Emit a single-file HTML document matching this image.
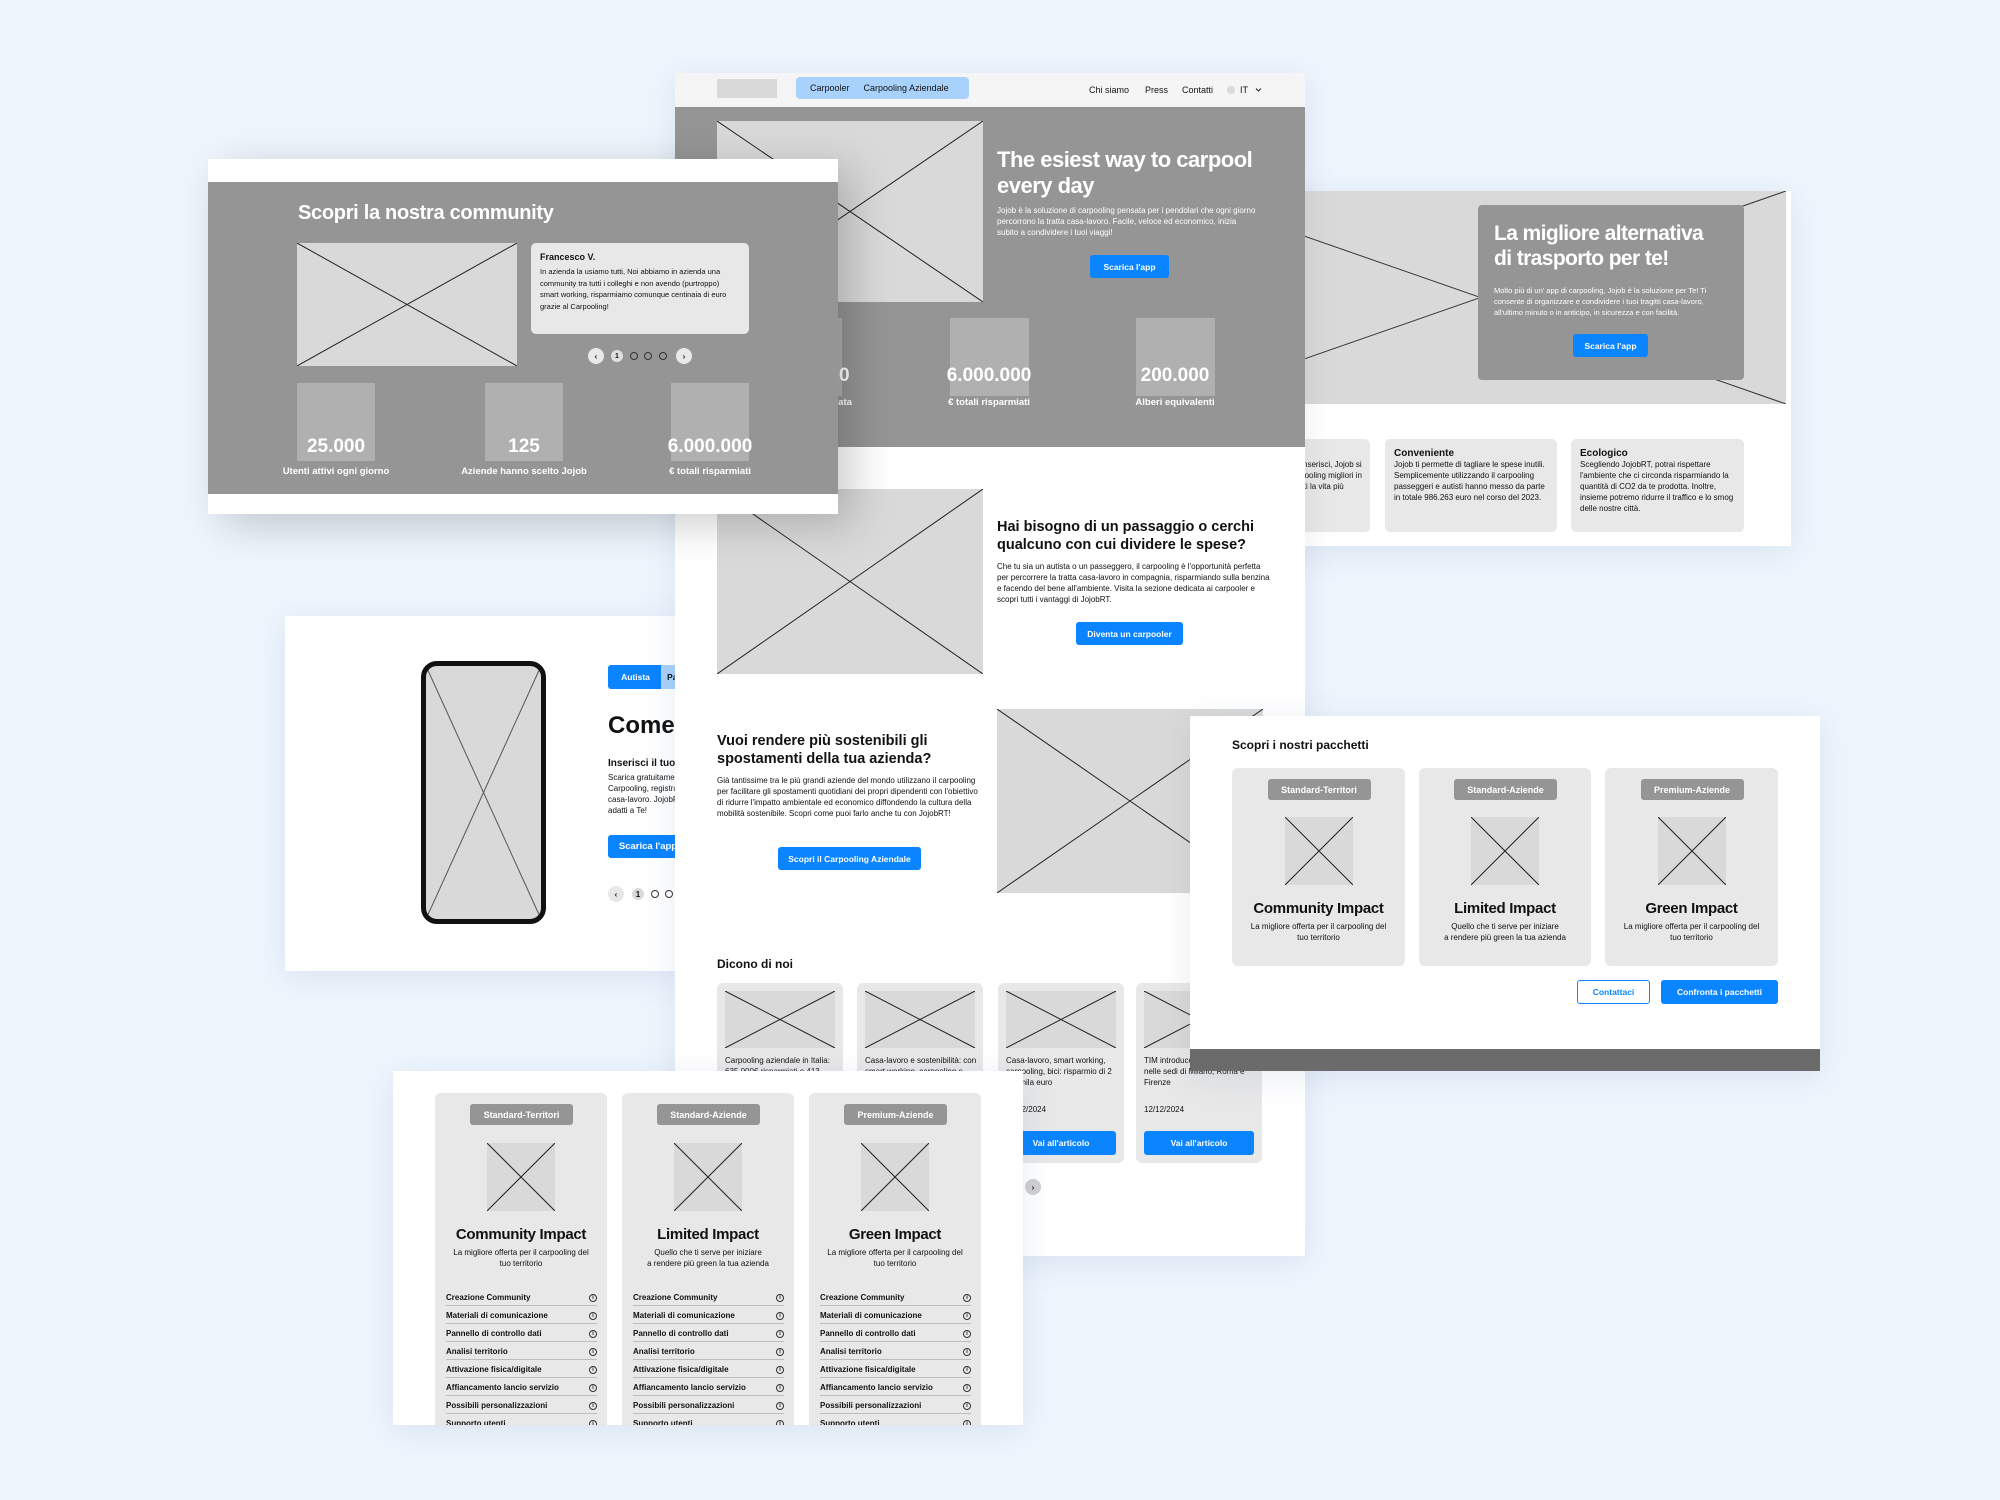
<!DOCTYPE html>
<html><head><meta charset="utf-8"><style>
*{margin:0;padding:0;box-sizing:border-box}
body{width:2000px;height:1500px;background:#eef5fd;font-family:"Liberation Sans",sans-serif;position:relative;overflow:hidden;color:#111}
.p{position:absolute;background:#fff;overflow:hidden;box-shadow:0 6px 30px rgba(90,120,160,.14)}
.a{position:absolute}
.ph{position:absolute;background:#d9d9d9}
.ph svg{position:absolute;left:0;top:0;width:100%;height:100%}
.btn{position:absolute;background:#0a84ff;color:#fff;border-radius:3px;font-size:8.5px;font-weight:bold;display:flex;align-items:center;justify-content:center}
.w{color:#fff}
.b{font-weight:bold}
.t8{font-size:8px;line-height:11px}
.stat{position:absolute;background:#b0b0b0}
.num{position:absolute;color:#fff;font-weight:bold;font-size:19px;text-align:center;width:200px;line-height:22px}
.lab{position:absolute;color:#fff;font-weight:bold;font-size:9.5px;text-align:center;width:200px;line-height:12px}
.card{position:absolute;background:#e8e8e8;border-radius:6px;overflow:hidden}
.badge{position:absolute;background:#959595;color:#fff;font-size:9px;font-weight:bold;border-radius:3px;width:103px;height:21px;display:flex;align-items:center;justify-content:center;left:50%;margin-left:-51px;top:11px}
.pimg{position:absolute;width:68px;height:68px;left:50%;margin-left:-34px}
.ptitle{position:absolute;width:100%;text-align:center;font-size:15px;font-weight:bold;line-height:18px;letter-spacing:-.3px}
.pdesc{position:absolute;width:100%;text-align:center;font-size:8px;line-height:11px}
.row{height:18px;border-bottom:1px solid #bdbdbd;font-size:8px;font-weight:bold;display:flex;align-items:center;justify-content:space-between;padding-top:2px}
.row i{font-style:normal;width:8px;height:8px;border:1px solid #333;border-radius:50%;display:inline-flex;align-items:center;justify-content:center;font-size:5.5px;font-weight:bold}
.circ{position:absolute;border-radius:50%;display:flex;align-items:center;justify-content:center;font-size:8px;font-weight:bold}
</style></head><body>

<!-- Panel E phone -->
<div class="p" style="left:285px;top:616px;width:390px;height:355px">
 <div class="ph" style="left:136px;top:45px;width:125px;height:263px;border:5px solid #111;border-radius:16px;overflow:hidden"><svg viewBox="0 0 100 100" preserveAspectRatio="none"><path d="M0 0L100 100M100 0L0 100" stroke="#555" stroke-width="1" vector-effect="non-scaling-stroke" fill="none"/></svg></div>
 <div class="btn" style="left:323px;top:49px;width:55px;height:24px;border-radius:3px 0 0 3px">Autista</div>
 <div class="a" style="left:376px;top:49px;width:80px;height:24px;background:#a8d1fb;font-size:8.5px;font-weight:bold;line-height:24px;padding-left:6px">Passeggero</div>
 <div class="a b" style="left:323px;top:96px;font-size:24px;white-space:nowrap">Come funziona</div>
 <div class="a b" style="left:323px;top:142px;font-size:10px;white-space:nowrap">Inserisci il tuo tragitto</div>
 <div class="a t8" style="left:323px;top:156px;width:150px">Scarica gratuitamente l'app Jojob Carpooling, registrati e inserisci il tuo casa-lavoro. JojobRT troverà i passaggi adatti a Te!</div>
 <div class="btn" style="left:323px;top:219px;width:80px;height:23px;font-size:9.5px">Scarica l'app</div>
 <div class="circ" style="left:323px;top:270px;width:16px;height:16px;background:#e8e8e8">‹</div>
 <div class="circ" style="left:347px;top:272px;width:12px;height:12px;background:#d9d9d9">1</div>
 <div class="circ" style="left:366px;top:274px;width:8px;height:8px;border:1px solid #333"></div>
 <div class="circ" style="left:380px;top:274px;width:8px;height:8px;border:1px solid #333"></div>
</div>

<!-- Panel C -->
<div class="p" style="left:1175px;top:191px;width:616px;height:355px">
 <div class="ph" style="left:0;top:0;width:611px;height:213px"><svg viewBox="0 0 100 100" preserveAspectRatio="none"><path d="M0 0L100 100M100 0L0 100" stroke="#333" stroke-width="1" vector-effect="non-scaling-stroke" fill="none"/></svg></div>
 <div class="a" style="left:303px;top:14px;width:266px;height:175px;background:#959595;border-radius:4px">
  <div class="a w b" style="left:16px;top:16px;font-size:21px;line-height:25px;width:250px;letter-spacing:-.6px;white-space:nowrap">La migliore alternativa<br>di trasporto per te!</div>
  <div class="a w" style="left:16px;top:80px;width:240px;font-size:7.5px;line-height:11px">Molto più di un' app di carpooling, Jojob è la soluzione per Te! Ti consente di organizzare e condividere i tuoi tragitti casa-lavoro, all'ultimo minuto o in anticipo, in sicurezza e con facilità.</div>
  <div class="btn" style="left:95px;top:129px;width:75px;height:23px">Scarica l'app</div>
 </div>
 <div class="card" style="left:29px;top:248px;width:166px;height:93px;border-radius:5px"><div class="a t8" style="left:9px;top:9px;width:150px"><b style="font-size:10px">Semplice</b><br>Scarica l'app, iscriverti e inserisci, Jojob si occuperà di trovarti il carpooling migliori in base al tuo tragitto, rendoti la vita più facile.</div></div>
 <div class="card" style="left:210px;top:248px;width:172px;height:93px;border-radius:5px"><div class="a t8" style="left:9px;top:9px;width:158px"><b style="font-size:10px">Conveniente</b><br>Jojob ti permette di tagliare le spese inutili. Semplicemente utilizzando il carpooling passeggeri e autisti hanno messo da parte in totale 986.263 euro nel corso del 2023.</div></div>
 <div class="card" style="left:396px;top:248px;width:173px;height:93px;border-radius:5px"><div class="a t8" style="left:9px;top:9px;width:158px"><b style="font-size:10px">Ecologico</b><br>Scegliendo JojobRT, potrai rispettare l'ambiente che ci circonda risparmiando la quantità di CO2 da te prodotta. Inoltre, insieme potremo ridurre il traffico e lo smog delle nostre città.</div></div>
</div>

<!-- Panel A main -->
<div class="p" style="left:675px;top:73px;width:630px;height:1183px">
 <div class="a" style="left:0;top:0;width:630px;height:34px;background:#f5f5f5"></div>
 <div class="a" style="left:42px;top:6px;width:60px;height:19px;background:#d9d9d9"></div>
 <div class="a" style="left:121px;top:4px;width:173px;height:22px;background:#a8d1fb;border-radius:4px;font-size:9px;line-height:22px;padding-left:14px;white-space:nowrap">Carpooler<span style="margin-left:14px">Carpooling Aziendale</span></div>
 <div class="a" style="left:414px;top:0;line-height:34px;font-size:9px;white-space:nowrap">Chi siamo</div>
 <div class="a" style="left:470px;top:0;line-height:34px;font-size:9px">Press</div>
 <div class="a" style="left:507px;top:0;line-height:34px;font-size:9px">Contatti</div>
 <div class="a" style="left:552px;top:13px;width:8px;height:8px;border-radius:50%;background:#d9d9d9"></div>
 <div class="a" style="left:565px;top:0;line-height:34px;font-size:9px">IT</div>
 <svg class="a" style="left:580px;top:14px" width="7" height="6" viewBox="0 0 7 6"><path d="M1 1.5L3.5 4L6 1.5" stroke="#222" fill="none" stroke-width="1"/></svg>
 <div class="a" style="left:0;top:34px;width:630px;height:340px;background:#959595"></div>
 <div class="ph" style="left:42px;top:48px;width:266px;height:181px"><svg viewBox="0 0 100 100" preserveAspectRatio="none"><path d="M0 0L100 100M100 0L0 100" stroke="#222" stroke-width="1" vector-effect="non-scaling-stroke" fill="none"/></svg></div>
 <div class="a w b" style="left:322px;top:74px;font-size:22px;line-height:26px;width:300px;letter-spacing:-.5px">The esiest way to carpool every day</div>
 <div class="a w" style="left:322px;top:132px;width:262px;font-size:8px;line-height:11px">Jojob è la soluzione di carpooling pensata per i pendolari che ogni giorno percorrono la tratta casa-lavoro. Facile, veloce ed economico, inizia subito a condividere i tuoi viaggi!</div>
 <div class="btn" style="left:415px;top:182px;width:79px;height:23px">Scarica l'app</div>
 <div class="stat" style="left:88px;top:245px;width:79px;height:78px"></div>
 <div class="stat" style="left:275px;top:245px;width:79px;height:78px"></div>
 <div class="stat" style="left:461px;top:245px;width:79px;height:78px"></div>
 <div class="num" style="left:27px;top:292px">15.000.000</div><div class="lab" style="left:27px;top:324px">Kg di CO2 risparmiata</div>
 <div class="num" style="left:214px;top:292px">6.000.000</div><div class="lab" style="left:214px;top:324px">€ totali risparmiati</div>
 <div class="num" style="left:400px;top:292px">200.000</div><div class="lab" style="left:400px;top:324px">Alberi equivalenti</div>
 <div class="ph" style="left:42px;top:416px;width:266px;height:185px"><svg viewBox="0 0 100 100" preserveAspectRatio="none"><path d="M0 0L100 100M100 0L0 100" stroke="#222" stroke-width="1" vector-effect="non-scaling-stroke" fill="none"/></svg></div>
 <div class="a b" style="left:322px;top:445px;width:280px;font-size:14.5px;line-height:18px">Hai bisogno di un passaggio o cerchi qualcuno con cui dividere le spese?</div>
 <div class="a t8" style="left:322px;top:488px;width:275px">Che tu sia un autista o un passeggero, il carpooling è l'opportunità perfetta per percorrere la tratta casa-lavoro in compagnia, risparmiando sulla benzina e facendo del bene all'ambiente. Visita la sezione dedicata ai carpooler e scopri tutti i vantaggi di JojobRT.</div>
 <div class="btn" style="left:401px;top:549px;width:107px;height:23px">Diventa un carpooler</div>
 <div class="a b" style="left:42px;top:659px;width:260px;font-size:14.5px;line-height:18px">Vuoi rendere più sostenibili gli spostamenti della tua azienda?</div>
 <div class="a t8" style="left:42px;top:702px;width:268px">Già tantissime tra le più grandi aziende del mondo utilizzano il carpooling per facilitare gli spostamenti quotidiani dei propri dipendenti con l'obiettivo di ridurre l'impatto ambientale ed economico diffondendo la cultura della mobilità sostenibile. Scopri come puoi farlo anche tu con JojobRT!</div>
 <div class="btn" style="left:103px;top:774px;width:143px;height:23px">Scopri il Carpooling Aziendale</div>
 <div class="ph" style="left:322px;top:636px;width:266px;height:184px"><svg viewBox="0 0 100 100" preserveAspectRatio="none"><path d="M0 0L100 100M100 0L0 100" stroke="#222" stroke-width="1" vector-effect="non-scaling-stroke" fill="none"/></svg></div>
 <div class="a b" style="left:42px;top:884px;font-size:12px">Dicono di noi</div>
 <div class="card" style="left:42px;top:910px;width:126px;height:180px"><div class="ph" style="left:8px;top:8px;width:110px;height:57px"><svg viewBox="0 0 100 100" preserveAspectRatio="none"><path d="M0 0L100 100M100 0L0 100" stroke="#222" stroke-width="1" vector-effect="non-scaling-stroke" fill="none"/></svg></div><div class="a t8" style="left:8px;top:72px;width:112px">Carpooling aziendale in Italia: 635.000€ risparmiati e 413 tonnellate di CO2</div><div class="a t8" style="left:8px;top:121px">12/12/2024</div><div class="btn" style="left:8px;top:148px;width:110px;height:24px">Vai all'articolo</div></div>
 <div class="card" style="left:182px;top:910px;width:126px;height:180px"><div class="ph" style="left:8px;top:8px;width:110px;height:57px"><svg viewBox="0 0 100 100" preserveAspectRatio="none"><path d="M0 0L100 100M100 0L0 100" stroke="#222" stroke-width="1" vector-effect="non-scaling-stroke" fill="none"/></svg></div><div class="a t8" style="left:8px;top:72px;width:112px">Casa-lavoro e sostenibilità: con smart working, carpooling e bici</div><div class="a t8" style="left:8px;top:121px">12/12/2024</div><div class="btn" style="left:8px;top:148px;width:110px;height:24px">Vai all'articolo</div></div>
 <div class="card" style="left:323px;top:910px;width:126px;height:180px"><div class="ph" style="left:8px;top:8px;width:110px;height:57px"><svg viewBox="0 0 100 100" preserveAspectRatio="none"><path d="M0 0L100 100M100 0L0 100" stroke="#222" stroke-width="1" vector-effect="non-scaling-stroke" fill="none"/></svg></div><div class="a t8" style="left:8px;top:72px;width:112px">Casa-lavoro, smart working, carpooling, bici: risparmio di 2 635mila euro</div><div class="a t8" style="left:8px;top:121px">12/12/2024</div><div class="btn" style="left:8px;top:148px;width:110px;height:24px">Vai all'articolo</div></div>
 <div class="card" style="left:461px;top:910px;width:126px;height:180px"><div class="ph" style="left:8px;top:8px;width:110px;height:57px"><svg viewBox="0 0 100 100" preserveAspectRatio="none"><path d="M0 0L100 100M100 0L0 100" stroke="#222" stroke-width="1" vector-effect="non-scaling-stroke" fill="none"/></svg></div><div class="a t8" style="left:8px;top:72px;width:112px">TIM introduce il carpooling nelle sedi di Milano, Roma e Firenze</div><div class="a t8" style="left:8px;top:121px">12/12/2024</div><div class="btn" style="left:8px;top:148px;width:110px;height:24px">Vai all'articolo</div></div>
 <div class="circ" style="left:350px;top:1106px;width:16px;height:16px;background:#d0d0d0">›</div>
</div>

<!-- Panel B community -->
<div class="p" style="left:208px;top:159px;width:630px;height:355px;box-shadow:14px 10px 40px rgba(0,0,0,.2)">
 <div class="a" style="left:0;top:23px;width:630px;height:312px;background:#959595"></div>
 <div class="a w b" style="left:90px;top:43px;font-size:20px;white-space:nowrap;letter-spacing:-.3px">Scopri la nostra community</div>
 <div class="ph" style="left:89px;top:84px;width:220px;height:123px"><svg viewBox="0 0 100 100" preserveAspectRatio="none"><path d="M0 0L100 100M100 0L0 100" stroke="#222" stroke-width="1" vector-effect="non-scaling-stroke" fill="none"/></svg></div>
 <div class="a" style="left:323px;top:84px;width:218px;height:91px;background:#e8e8e8;border-radius:5px">
  <div class="a b" style="left:9px;top:9px;font-size:9px">Francesco V.</div>
  <div class="a" style="left:9px;top:23px;width:195px;font-size:7.5px;line-height:11.5px">In azienda la usiamo tutti, Noi abbiamo in azienda una community tra tutti i colleghi e non avendo (purtroppo) smart working, risparmiamo comunque centinaia di euro grazie al Carpooling!</div>
 </div>
 <div class="circ" style="left:380px;top:189px;width:16px;height:16px;background:#e8e8e8">‹</div>
 <div class="circ" style="left:403px;top:191px;width:12px;height:12px;background:#e0e0e0;font-size:7px">1</div>
 <div class="circ" style="left:422px;top:193px;width:8px;height:8px;border:1px solid #333"></div>
 <div class="circ" style="left:436px;top:193px;width:8px;height:8px;border:1px solid #333"></div>
 <div class="circ" style="left:451px;top:193px;width:8px;height:8px;border:1px solid #333"></div>
 <div class="circ" style="left:468px;top:189px;width:16px;height:16px;background:#e8e8e8">›</div>
 <div class="stat" style="left:89px;top:224px;width:78px;height:78px"></div>
 <div class="stat" style="left:277px;top:224px;width:78px;height:78px"></div>
 <div class="stat" style="left:463px;top:224px;width:78px;height:78px"></div>
 <div class="num" style="left:28px;top:277px">25.000</div><div class="lab" style="left:28px;top:307px">Utenti attivi ogni giorno</div>
 <div class="num" style="left:216px;top:277px">125</div><div class="lab" style="left:216px;top:307px">Aziende hanno scelto Jojob</div>
 <div class="num" style="left:402px;top:277px">6.000.000</div><div class="lab" style="left:402px;top:307px">€ totali risparmiati</div>
</div>

<!-- Panel F pricing detail -->
<div class="p" style="left:393px;top:1071px;width:630px;height:354px">
 <div class="card" style="left:42px;top:22px;width:172px;height:340px">
  <div class="badge">Standard-Territori</div>
  <div class="ph pimg" style="top:50px"><svg viewBox="0 0 100 100" preserveAspectRatio="none"><path d="M0 0L100 100M100 0L0 100" stroke="#222" stroke-width="1" vector-effect="non-scaling-stroke" fill="none"/></svg></div>
  <div class="ptitle" style="top:133px">Community Impact</div>
  <div class="pdesc" style="top:154px">La migliore offerta per il carpooling del<br>tuo territorio</div>
  <div class="a" style="left:11px;top:195px;width:151px"><div class="row">Creazione Community<i>i</i></div><div class="row">Materiali di comunicazione<i>i</i></div><div class="row">Pannello di controllo dati<i>i</i></div><div class="row">Analisi territorio<i>i</i></div><div class="row">Attivazione fisica/digitale<i>i</i></div><div class="row">Affiancamento lancio servizio<i>i</i></div><div class="row">Possibili personalizzazioni<i>i</i></div><div class="row">Supporto utenti<i>i</i></div></div>
 </div>
 <div class="card" style="left:229px;top:22px;width:172px;height:340px">
  <div class="badge">Standard-Aziende</div>
  <div class="ph pimg" style="top:50px"><svg viewBox="0 0 100 100" preserveAspectRatio="none"><path d="M0 0L100 100M100 0L0 100" stroke="#222" stroke-width="1" vector-effect="non-scaling-stroke" fill="none"/></svg></div>
  <div class="ptitle" style="top:133px">Limited Impact</div>
  <div class="pdesc" style="top:154px">Quello che ti serve per iniziare<br>a rendere più green la tua azienda</div>
  <div class="a" style="left:11px;top:195px;width:151px"><div class="row">Creazione Community<i>i</i></div><div class="row">Materiali di comunicazione<i>i</i></div><div class="row">Pannello di controllo dati<i>i</i></div><div class="row">Analisi territorio<i>i</i></div><div class="row">Attivazione fisica/digitale<i>i</i></div><div class="row">Affiancamento lancio servizio<i>i</i></div><div class="row">Possibili personalizzazioni<i>i</i></div><div class="row">Supporto utenti<i>i</i></div></div>
 </div>
 <div class="card" style="left:416px;top:22px;width:172px;height:340px">
  <div class="badge">Premium-Aziende</div>
  <div class="ph pimg" style="top:50px"><svg viewBox="0 0 100 100" preserveAspectRatio="none"><path d="M0 0L100 100M100 0L0 100" stroke="#222" stroke-width="1" vector-effect="non-scaling-stroke" fill="none"/></svg></div>
  <div class="ptitle" style="top:133px">Green Impact</div>
  <div class="pdesc" style="top:154px">La migliore offerta per il carpooling del<br>tuo territorio</div>
  <div class="a" style="left:11px;top:195px;width:151px"><div class="row">Creazione Community<i>i</i></div><div class="row">Materiali di comunicazione<i>i</i></div><div class="row">Pannello di controllo dati<i>i</i></div><div class="row">Analisi territorio<i>i</i></div><div class="row">Attivazione fisica/digitale<i>i</i></div><div class="row">Affiancamento lancio servizio<i>i</i></div><div class="row">Possibili personalizzazioni<i>i</i></div><div class="row">Supporto utenti<i>i</i></div></div>
 </div>
</div>

<!-- Panel D packages -->
<div class="p" style="left:1190px;top:716px;width:630px;height:355px">
 <div class="a" style="left:0;top:333px;width:630px;height:22px;background:#6b6b6b"></div>
 <div class="a b" style="left:42px;top:22px;font-size:12px;white-space:nowrap">Scopri i nostri pacchetti</div>
 <div class="card" style="left:42px;top:52px;width:173px;height:198px">
  <div class="badge">Standard-Territori</div>
  <div class="ph pimg" style="top:49px"><svg viewBox="0 0 100 100" preserveAspectRatio="none"><path d="M0 0L100 100M100 0L0 100" stroke="#222" stroke-width="1" vector-effect="non-scaling-stroke" fill="none"/></svg></div>
  <div class="ptitle" style="top:132px">Community Impact</div>
  <div class="pdesc" style="top:153px">La migliore offerta per il carpooling del<br>tuo territorio</div>
 </div>
 <div class="card" style="left:229px;top:52px;width:172px;height:198px">
  <div class="badge">Standard-Aziende</div>
  <div class="ph pimg" style="top:49px"><svg viewBox="0 0 100 100" preserveAspectRatio="none"><path d="M0 0L100 100M100 0L0 100" stroke="#222" stroke-width="1" vector-effect="non-scaling-stroke" fill="none"/></svg></div>
  <div class="ptitle" style="top:132px">Limited Impact</div>
  <div class="pdesc" style="top:153px">Quello che ti serve per iniziare<br>a rendere più green la tua azienda</div>
 </div>
 <div class="card" style="left:415px;top:52px;width:173px;height:198px">
  <div class="badge">Premium-Aziende</div>
  <div class="ph pimg" style="top:49px"><svg viewBox="0 0 100 100" preserveAspectRatio="none"><path d="M0 0L100 100M100 0L0 100" stroke="#222" stroke-width="1" vector-effect="non-scaling-stroke" fill="none"/></svg></div>
  <div class="ptitle" style="top:132px">Green Impact</div>
  <div class="pdesc" style="top:153px">La migliore offerta per il carpooling del<br>tuo territorio</div>
 </div>
 <div class="btn" style="left:387px;top:264px;width:73px;height:24px;background:#fff;color:#0a84ff;border:1px solid #0a84ff">Contattaci</div>
 <div class="btn" style="left:471px;top:264px;width:117px;height:24px">Confronta i pacchetti</div>
</div>

</body></html>
